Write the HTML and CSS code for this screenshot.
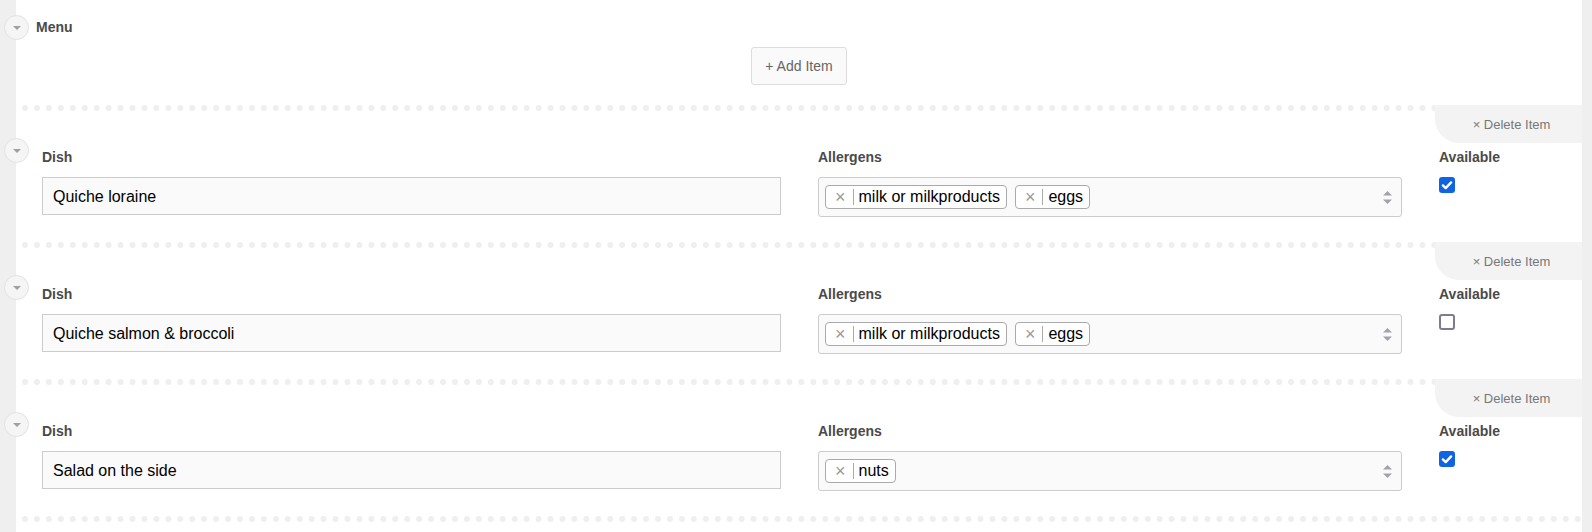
FILE: index.html
```html
<!DOCTYPE html>
<html lang="en">
<head>
<meta charset="utf-8">
<title>Menu</title>
<link rel="stylesheet" href="styles.css">
</head>
<body>
<div class="editor">
  <section class="menu">
    <div class="menu-head">
      <span class="toggle"><span class="caret"></span></span>
      <h2 class="menu-title">Menu</h2>
      <div class="add-row"><button class="add-btn" type="button">+ Add Item</button></div>
    </div>

    <div class="items">
      <div class="item">
        <span class="toggle"><span class="caret"></span></span>
        <button class="delete-btn" type="button">× Delete Item</button>
        <div class="fields">
          <div class="field">
            <label class="field-label">Dish</label>
            <input class="text-input" type="text" value="Quiche loraine">
          </div>
          <div class="field">
            <label class="field-label">Allergens</label>
            <div class="tag-select">
              <span class="tag"><span class="tag-remove">×</span><span class="tag-text">milk or milkproducts</span></span>
              <span class="tag"><span class="tag-remove">×</span><span class="tag-text">eggs</span></span>
              <svg class="arrows" width="9" height="13" viewBox="0 0 9 13"><path d="M0 4.5L4.5 0L9 4.5Z M0 8.5L4.5 13L9 8.5Z" fill="#a2a2aa"/></svg>
            </div>
          </div>
          <div class="field">
            <label class="field-label">Available</label>
            <span class="checkbox checked"><svg width="16" height="16" viewBox="0 0 16 16"><path d="M3.9 8.4l2.8 2.7 5.4-5.7" fill="none" stroke="#fff" stroke-width="2.4" stroke-linecap="round" stroke-linejoin="round"/></svg></span>
          </div>
        </div>
      </div>

      <div class="item">
        <span class="toggle"><span class="caret"></span></span>
        <button class="delete-btn" type="button">× Delete Item</button>
        <div class="fields">
          <div class="field">
            <label class="field-label">Dish</label>
            <input class="text-input" type="text" value="Quiche salmon &amp; broccoli">
          </div>
          <div class="field">
            <label class="field-label">Allergens</label>
            <div class="tag-select">
              <span class="tag"><span class="tag-remove">×</span><span class="tag-text">milk or milkproducts</span></span>
              <span class="tag"><span class="tag-remove">×</span><span class="tag-text">eggs</span></span>
              <svg class="arrows" width="9" height="13" viewBox="0 0 9 13"><path d="M0 4.5L4.5 0L9 4.5Z M0 8.5L4.5 13L9 8.5Z" fill="#a2a2aa"/></svg>
            </div>
          </div>
          <div class="field">
            <label class="field-label">Available</label>
            <span class="checkbox unchecked"></span>
          </div>
        </div>
      </div>

      <div class="item">
        <span class="toggle"><span class="caret"></span></span>
        <button class="delete-btn" type="button">× Delete Item</button>
        <div class="fields">
          <div class="field">
            <label class="field-label">Dish</label>
            <input class="text-input" type="text" value="Salad on the side">
          </div>
          <div class="field">
            <label class="field-label">Allergens</label>
            <div class="tag-select">
              <span class="tag"><span class="tag-remove">×</span><span class="tag-text">nuts</span></span>
              <svg class="arrows" width="9" height="13" viewBox="0 0 9 13"><path d="M0 4.5L4.5 0L9 4.5Z M0 8.5L4.5 13L9 8.5Z" fill="#a2a2aa"/></svg>
            </div>
          </div>
          <div class="field">
            <label class="field-label">Available</label>
            <span class="checkbox checked"><svg width="16" height="16" viewBox="0 0 16 16"><path d="M3.9 8.4l2.8 2.7 5.4-5.7" fill="none" stroke="#fff" stroke-width="2.4" stroke-linecap="round" stroke-linejoin="round"/></svg></span>
          </div>
        </div>
      </div>
    </div>
  </section>
</div>
</body>
</html>
```

FILE: styles.css
```css
html, body {
  margin: 0;
  height: 100%;
}

body {
  font-family: "Liberation Sans", Arial, sans-serif;
  background: #fff;
  color: #000;
}

.editor {
  height: 100vh;
  box-sizing: border-box;
  border-left: 16px solid #efefef;
  border-right: 10px solid #efefef;
}

.menu-head {
  position: relative;
  padding-top: 17px;
}

.toggle {
  position: absolute;
  width: 25px;
  height: 25px;
  box-sizing: border-box;
  border-radius: 50%;
  background: #f5f5f5;
  border: 1px solid #e2e2e2;
  display: flex;
  align-items: center;
  justify-content: center;
}

.menu-head > .toggle {
  left: -12px;
  top: 15px;
}

.item > .toggle {
  left: -18px;
  top: 27px;
}

.caret {
  width: 0;
  height: 0;
  border-left: 4px solid transparent;
  border-right: 4px solid transparent;
  border-top: 4px solid #a0a0a0;
  margin-top: 1px;
}

.menu-title {
  margin: 0;
  padding-left: 20px;
  font-size: 14px;
  line-height: 20px;
  font-weight: bold;
  color: #4a4a4a;
}

.add-row {
  display: flex;
  justify-content: center;
  padding: 10px 0 20px;
}

.add-btn {
  height: 38px;
  padding: 0 13px;
  border: 1px solid #ddd;
  border-radius: 3px;
  background: #fafafa;
  font: 14px "Liberation Sans", Arial, sans-serif;
  color: #666;
}

.items {
  margin-left: 6px;
  border-bottom: 6px dotted #efefef;
}

.item {
  position: relative;
  border-top: 6px dotted #efefef;
  padding: 36px 0 25px 20px;
}

.delete-btn {
  position: absolute;
  top: -6px;
  right: 0;
  width: 147px;
  height: 38px;
  border: 0;
  background: #f3f3f3;
  border-bottom-left-radius: 24px;
  font: 13px "Liberation Sans", Arial, sans-serif;
  color: #777;
  padding: 0 0 0 6px;
}

.fields {
  display: grid;
  grid-template-columns: 739px 584px 1fr;
  column-gap: 37px;
}

.field-label {
  display: block;
  font-size: 14px;
  font-weight: bold;
  line-height: 20px;
  color: #4a4a4a;
  margin-bottom: 10px;
}

.text-input {
  display: block;
  width: 100%;
  box-sizing: border-box;
  height: 38px;
  margin: 0;
  border: 1px solid #ccc;
  border-radius: 0;
  background: #fafafa;
  padding: 1px 10px 0;
  font: 16px "Liberation Sans", Arial, sans-serif;
  color: #000;
  outline: none;
}

.tag-select {
  box-sizing: border-box;
  height: 40px;
  border: 1px solid #ccc;
  border-radius: 3px;
  background: #fafafa;
  display: flex;
  align-items: center;
  gap: 8px;
  padding: 0 9px 0 6px;
}

.tag {
  display: inline-flex;
  align-items: center;
  height: 24px;
  box-sizing: border-box;
  border: 1px solid #aaa;
  border-radius: 4px;
  background: #fff;
  font-size: 16px;
  color: #000;
}

.tag-remove {
  height: 16px;
  line-height: 16px;
  padding: 0 7px 0 9px;
  border-right: 1px solid #aaa;
  color: #999;
  font-size: 18px;
}

.tag-text {
  padding: 0 6px 0 5px;
  line-height: 22px;
}

.arrows {
  margin-left: auto;
  display: block;
}

.checkbox {
  display: block;
  width: 16px;
  height: 16px;
  box-sizing: border-box;
  border-radius: 3px;
  margin-top: 6px;
}

.checkbox svg {
  display: block;
}

.checkbox.checked {
  background: #1064e1;
}

.checkbox.unchecked {
  border: 2px solid #7d7c8c;
  background: #fff;
}
```
